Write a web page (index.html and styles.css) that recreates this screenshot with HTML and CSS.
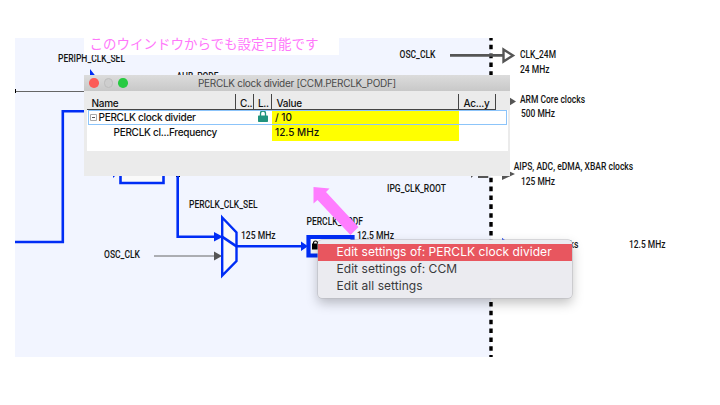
FILE: index.html
```html
<!DOCTYPE html>
<html lang="ja">
<head>
<meta charset="utf-8">
<title>PERCLK clock divider</title>
<link rel="stylesheet" href="styles.css">
</head>
<body>
<main class="canvas">
  <svg class="diagram" width="720" height="405" viewBox="0 0 720 405">
    <path class="region" d="M15 38H491V357H15Z"/>
    <path class="boundary" d="M491 35.8V357"/>
    <path class="cover" d="M484 30H498V38H484Z"/>
    <g class="thin">
      <path d="M15 91.5H90M154 256H216"/>
      <path class="thick" d="M450 55.4H503"/>
    </g>
    <path class="black" d="M15 89h1v4h-1zM176 174h4v3h-4z"/>
    <path class="open-arrow" d="M503.500 49.500L513 55.500L503.500 61.500Z"/>
    <path class="gray" d="M214 251.500L222 256L214 260.500ZM507 96L516 101.500L507 107ZM502 168L515 174L502 180ZM471 174h4l-4 4z"/>
    <path class="thin thick" d="M478 176.600H487V174"/>
    <path class="wire" d="M15 242H62.800V111.200H84M177.700 174V236.700H216M237 246.300H302"/>
    <path class="blue" d="M90 69L98 79H90ZM214 232L223 236.700L214 241.500ZM301 241.500L308 246.300L301 251ZM113 174H117L113 178ZM502 238L508 242H502Z"/>
    <path class="node" d="M120.500 170H163.500V183H120.500Z"/>
    <path class="node mux" d="M222.200 217.500L236.500 232.500V261L222.200 275.500Z"/>
    <path class="wire" d="M222 236.700L236.500 246.300"/>
    <path class="node divider" d="M308.500 237H352.500V255.500H308.500Z"/>
    <path class="black" d="M312 243.500h7v6h-7z"/>
    <path class="shackle" d="M313.500 244v-1a2 2 0 0 1 4 0v1"/>
    <g class="label">
      <text x="58" y="62" textLength="67" lengthAdjust="spacingAndGlyphs">PERIPH_CLK_SEL</text>
      <text x="176.500" y="80" textLength="42" lengthAdjust="spacingAndGlyphs">AHB_PODF</text>
      <text x="399.500" y="57.900" textLength="36" lengthAdjust="spacingAndGlyphs">OSC_CLK</text>
      <text x="520" y="57.900" textLength="36" lengthAdjust="spacingAndGlyphs">CLK_24M</text>
      <text x="520" y="73" textLength="29.500" lengthAdjust="spacingAndGlyphs">24 MHz</text>
      <text x="520" y="103" textLength="65" lengthAdjust="spacingAndGlyphs">ARM Core clocks</text>
      <text x="521" y="117.300" textLength="34" lengthAdjust="spacingAndGlyphs">500 MHz</text>
      <text x="513.700" y="170.300" textLength="119.500" lengthAdjust="spacingAndGlyphs">AIPS, ADC, eDMA, XBAR clocks</text>
      <text x="521" y="185.300" textLength="34" lengthAdjust="spacingAndGlyphs">125 MHz</text>
      <text x="387" y="191.500" textLength="59" lengthAdjust="spacingAndGlyphs">IPG_CLK_ROOT</text>
      <text x="189" y="208.300" textLength="68.500" lengthAdjust="spacingAndGlyphs">PERCLK_CLK_SEL</text>
      <text x="241" y="238.500" textLength="34.500" lengthAdjust="spacingAndGlyphs">125 MHz</text>
      <text x="104" y="258" textLength="36" lengthAdjust="spacingAndGlyphs">OSC_CLK</text>
      <text x="306.500" y="225.200" textLength="56.500" lengthAdjust="spacingAndGlyphs">PERCLK_PODF</text>
      <text x="357" y="238.500" textLength="37" lengthAdjust="spacingAndGlyphs">12.5 MHz</text>
      <text x="520" y="248.300" textLength="58.500" lengthAdjust="spacingAndGlyphs">PERCLK clocks</text>
      <text x="629" y="248.300" textLength="36.500" lengthAdjust="spacingAndGlyphs">12.5 MHz</text>
    </g>
    <path class="pointer" d="M313.500 187L329.500 188.500L326 192L358.500 227L350.500 235L317.500 200L313.500 203.500Z"/>
  </svg>

  <p class="note">このウインドウからでも設定可能です</p>

  <section class="window">
    <header class="titlebar">
      <span class="light close"></span><span class="light idle"></span><span class="light grow"></span>
      <span class="title">PERCLK clock divider [CCM.PERCLK_PODF]</span>
    </header>
    <div class="table">
      <div class="row head">
        <span>Name</span><span>C..</span><span>L..</span><span>Value</span><span>Ac...y</span>
      </div>
      <div class="row selected">
        <span class="name"><svg class="toggle" width="7" height="7" viewBox="0 0 7 7"><path d="M.5 .5H6.500V6.500H.5Z"/><path class="minus" d="M2 3.500H5"/></svg>PERCLK clock divider</span>
        <span></span>
        <span class="lock"><svg width="10" height="13" viewBox="0 0 10 13"><path class="hasp" d="M2.500 6V3.500a2.500 2.500 0 0 1 5 0V6"/><rect y="5.500" width="10" height="6.500" rx=".7"/></svg></span>
        <span class="value">/ 10</span><span></span>
      </div>
      <div class="row last">
        <span class="child">PERCLK cl...Frequency</span><span></span><span></span><span class="value">12.5 MHz</span><span></span>
      </div>
    </div>
  </section>

  <ul class="menu">
    <li class="active">Edit settings of: PERCLK clock divider</li>
    <li>Edit settings of: CCM</li>
    <li>Edit all settings</li>
  </ul>
</main>
</body>
</html>
```

FILE: styles.css
```css
* { box-sizing: border-box; }
body { margin: 0; background: #fff; font-family: Inter, "Liberation Sans", sans-serif; }
.canvas { position: relative; width: 720px; height: 405px; overflow: hidden; }
.diagram { display: block; }
.region { fill: #f2f5ff; }
.cover { fill: #fff; }
.boundary { stroke: #000; stroke-width: 3.4; stroke-dasharray: 4.6 4.27; }
.thin { fill: none; stroke: #666; stroke-width: 1; }
.thick { stroke: #555; stroke-width: 2.6; }
.open-arrow { fill: #fff; stroke: #555; stroke-width: 2.4; }
.gray { fill: #555; }
.black { fill: #000; }
.wire { fill: none; stroke: #002df5; stroke-width: 2.6; }
.blue { fill: #002df5; }
.node { fill: #fafafa; stroke: #002df5; stroke-width: 2.6; }
.mux { stroke-width: 2.4; }
.divider { stroke-width: 4.2; }
.shackle { fill: none; stroke: #000; stroke-width: 1.2; }
.pointer { fill: #ff7dff; }
.label { font: 500 10px Roboto, sans-serif; fill: #151515; }

.note {
  position: absolute; left: 84px; top: 34px; width: 255px; height: 21px;
  margin: 0; padding-left: 5.500px; background: #fff; color: #ff78fb;
  font: 400 13.500px/18px "Noto Sans CJK JP", sans-serif; white-space: nowrap;
}

.window {
  position: absolute; left: 84px; top: 75px; width: 426px; height: 101px;
  background: #ebebeb;
}
.titlebar {
  display: flex; align-items: center; gap: 5px; height: 16px; padding-left: 5px;
  background: linear-gradient(#dcdcdc, #c8c8c8);
}
.light { width: 9.500px; height: 9.500px; border-radius: 50%; }
.close { background: #fc5b57; }
.idle { background: #cecece; border: 1px solid #bdbdbd; }
.grow { background: #28ca42; }
.title { margin-left: 65.500px; color: #4a4a4a; font-size: 10px; letter-spacing: -.29px; white-space: nowrap; }
.table { margin: 3px 2px 0 3px; height: 57px; background: #fff; }
.row {
  display: grid; grid-template-columns: 149px 18px 18px 187px 37px 1fr;
  height: 15px; font-size: 10px; font-weight: 500; line-height: 15px; letter-spacing: -.28px; color: #111; white-space: nowrap;
}
.head { height: 16px; line-height: 18px; background: #ebebeb; }
.head span { padding-left: 4.500px; border-right: 1.500px solid #444; border-bottom: 1px solid #444; overflow: hidden; }
.head span:nth-child(2), .head span:nth-child(3) { padding-left: 4px; letter-spacing: -.4px; }
.selected { height: 14px; line-height: 15px; position: relative; }
.selected::after { content: ""; position: absolute; inset: 0 1px -1px 1px; border: 1.500px solid #8cc4fa; }
.name { display: flex; align-items: center; gap: 1.500px; padding-left: 3px; }
.toggle { fill: #fff; stroke: #aaa; }
.toggle .minus { stroke: #555; }
.lock { padding-left: 4px; line-height: 0; }
.lock svg { fill: #20937e; }
.lock .hasp { fill: none; stroke: #20937e; stroke-width: 1.300; }
.value { padding-left: 3px; background: #ff0; letter-spacing: 0; }
.last { line-height: 17px; }
.child { padding-left: 26.500px; }

.menu {
  position: absolute; left: 318px; top: 240px; width: 253.500px; height: 57.500px;
  margin: 0; padding: 3.500px 0 0; list-style: none; border-radius: 4px;
  background: #ebebf0; color: #3a3a3c; font-size: 12px; line-height: 15.500px; letter-spacing: .05px;
  box-shadow: 0 0 0 .5px #b8b8bd, 0 5px 12px rgba(0, 0, 0, .25); white-space: nowrap;
}
.menu li { height: 17px; padding-left: 18.500px; }
.menu .active { background: #e8565f; color: #fff; }
```
